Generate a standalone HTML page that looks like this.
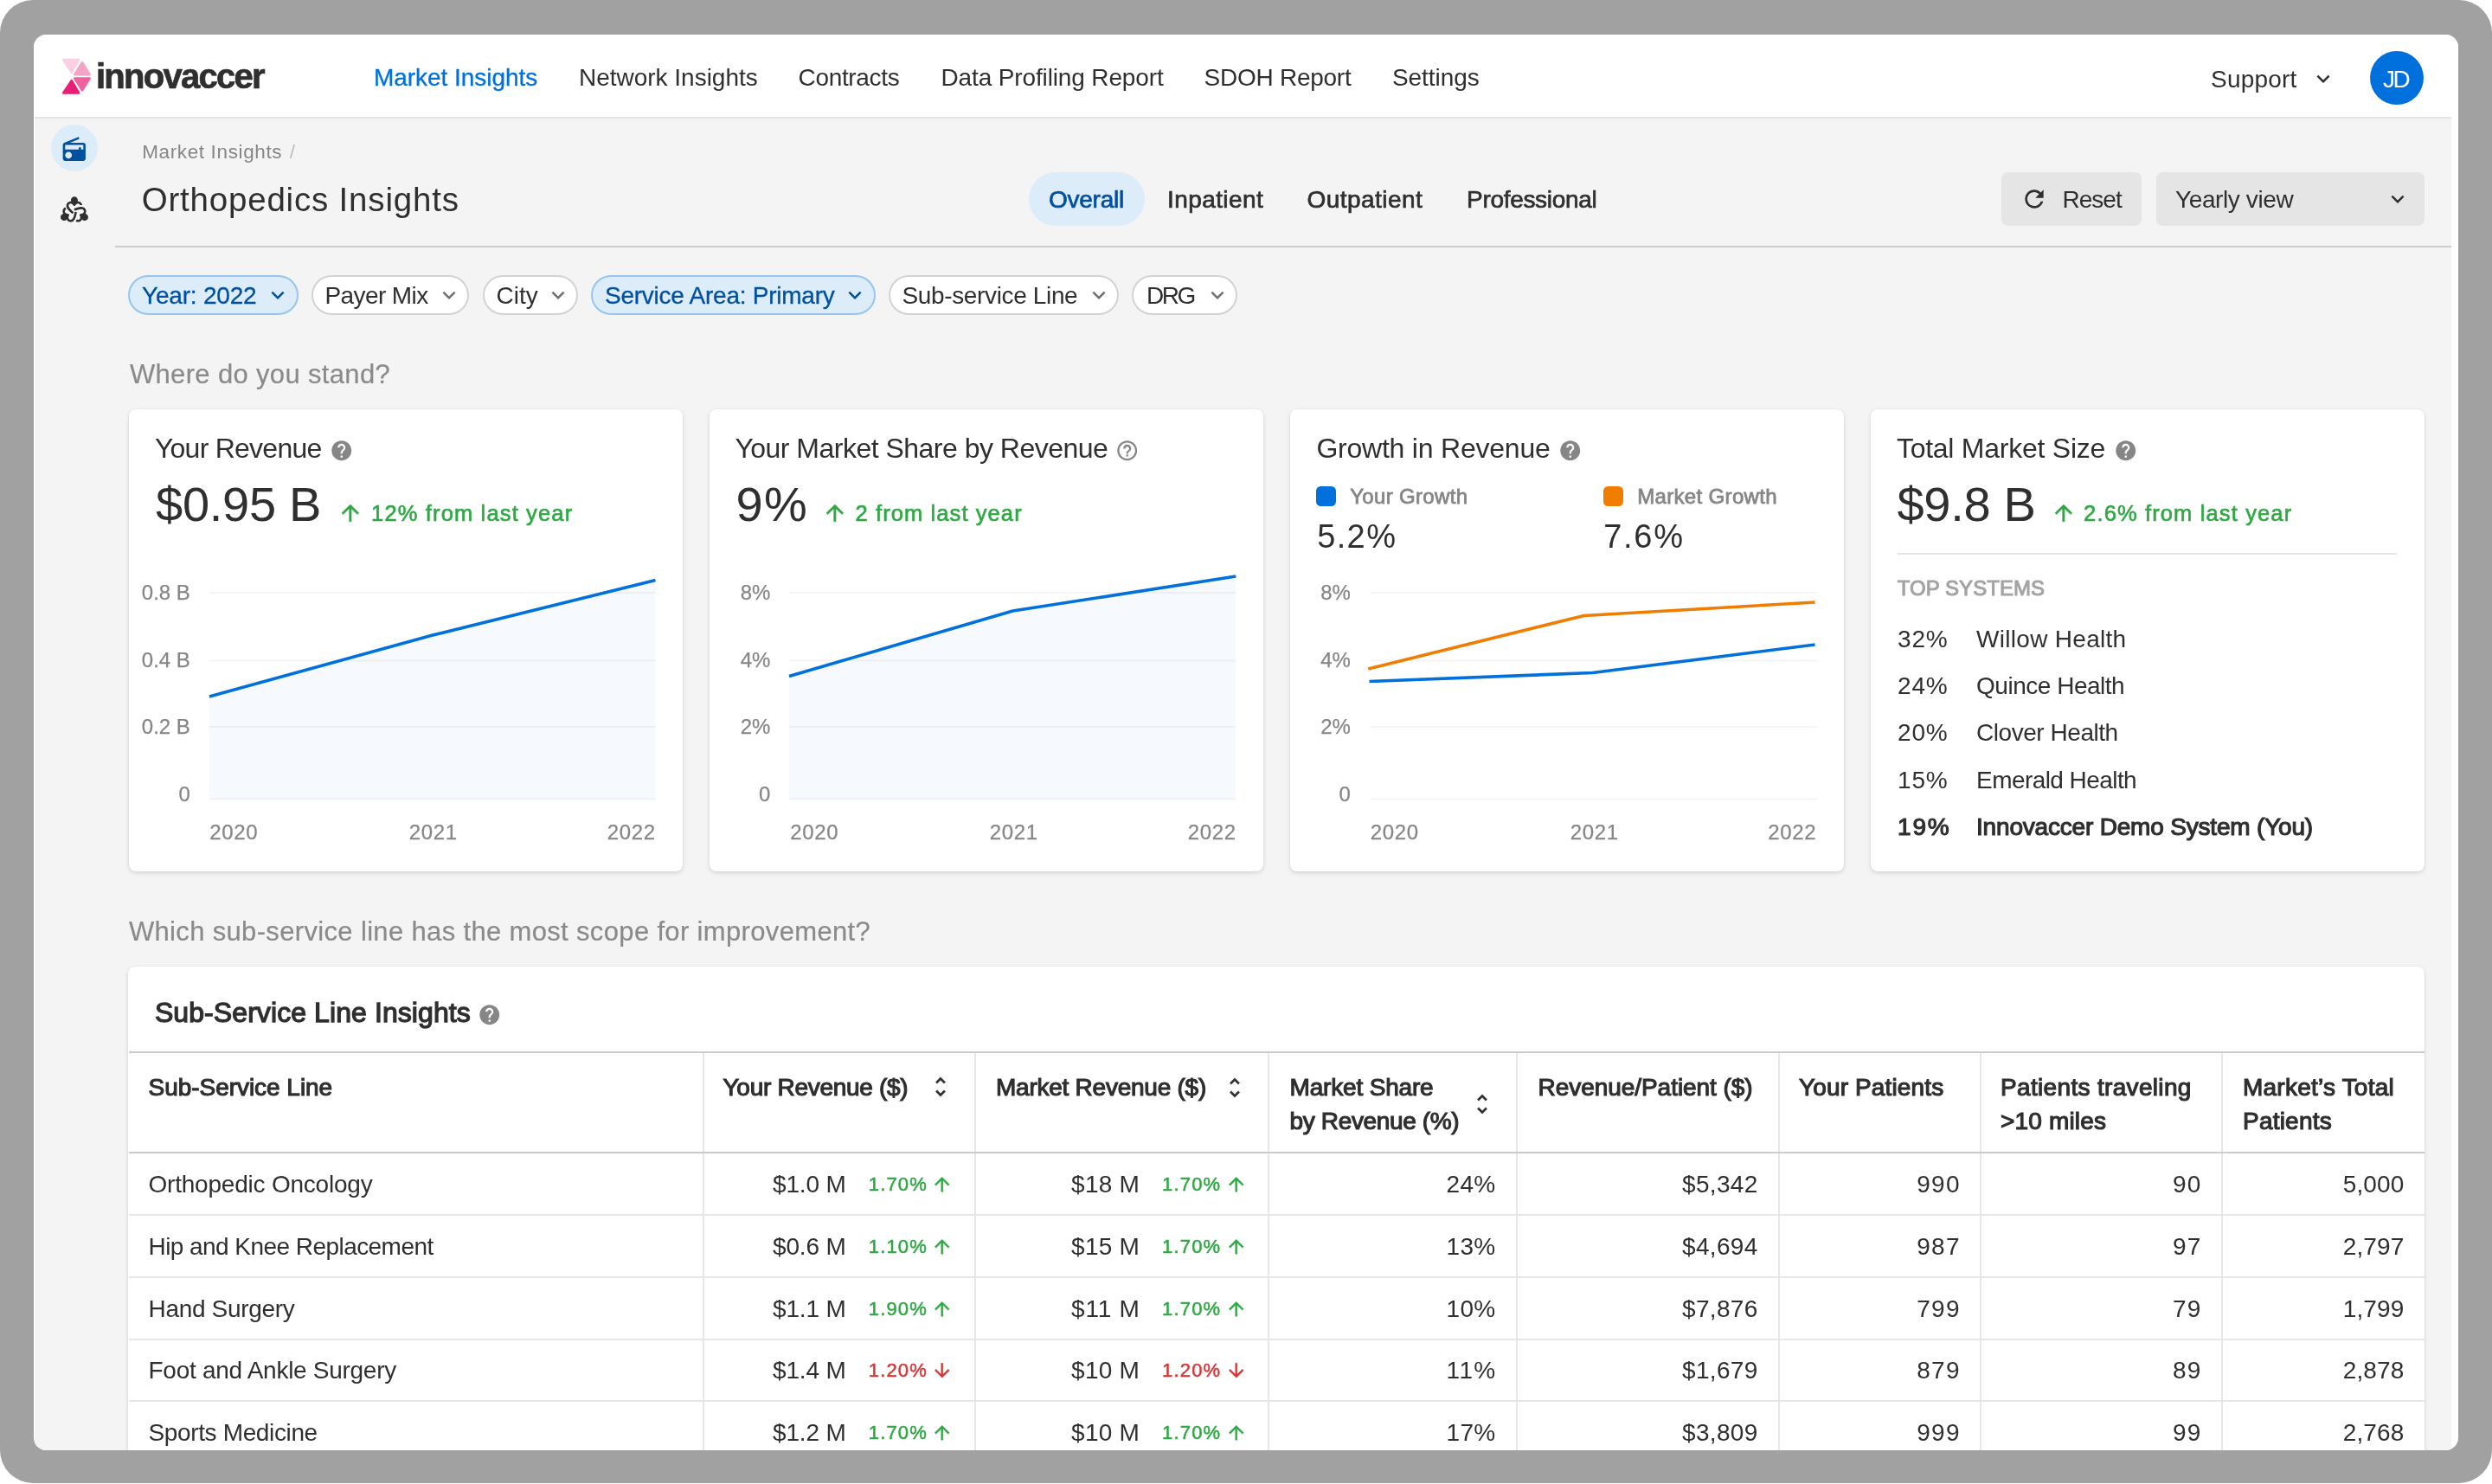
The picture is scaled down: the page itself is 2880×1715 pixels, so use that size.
<!DOCTYPE html><html lang="en"><head><meta charset="utf-8"><title>Orthopedics Insights</title><style>
html,body{margin:0;padding:0;background:#fff}
body{width:2880px;height:1715px;overflow:hidden;position:relative;font-family:"Liberation Sans",Arial,Helvetica,sans-serif}
#frame{position:absolute;left:0;top:0;width:2880px;height:1714.4px;background:#a1a1a1;border-radius:38px}
#win{position:absolute;left:39px;top:40px;width:2802px;height:1636px;border-radius:14.5px;overflow:hidden;background:#fff}
#pg{position:absolute;left:-39px;top:-40px;width:2880px;height:1715px;will-change:transform}
#pg div{position:absolute}
.i{position:absolute;overflow:visible}
.t{position:absolute;white-space:nowrap;line-height:1;display:block}
</style></head><body><div id="frame"></div>
<div id="win">
<div id="pg">
<div style="left:39px;top:40px;width:2802px;height:95px;background:#fff"></div>
<div style="left:40px;top:135px;width:2793px;height:2px;background:#e4e4e4"></div>
<div style="left:39.5px;top:137px;width:2793.5px;height:1540px;background:#f4f4f4"></div>
<svg class="i" style="left:66px;top:62px" width="46" height="52" viewBox="66 62 46 52"><g stroke-linejoin="round" stroke-width="2.7"><path d="M73.2 69.2H91L82.7 83.6z" fill="#fbd0e3" stroke="#fbd0e3"/><path d="M95 72.3L103.6 86.2H86.3z" fill="#f5a3c7" stroke="#f5a3c7"/><path d="M86.3 90.5H103.6L95 104.4z" fill="#ef629f" stroke="#ef629f"/><path d="M82.7 93.2L91 107.5H73.2z" fill="#e81f76" stroke="#e81f76"/></g></svg>
<span class="t" id="t0" style="font-size:40px;color:#2f2f2f;font-weight:700;-webkit-text-stroke:0.7px #2f2f2f;letter-spacing:-1.713px;left:110.90px;top:67.80px;">innovaccer</span>
<span class="t" id="t1" style="font-size:28px;color:#0070dd;-webkit-text-stroke:0.3px #0070dd;letter-spacing:-0.049px;left:432.02px;top:75.70px;">Market Insights</span>
<span class="t" id="t2" style="font-size:28px;color:#2f2f2f;letter-spacing:-0.019px;left:669.02px;top:75.70px;">Network Insights</span>
<span class="t" id="t3" style="font-size:28px;color:#2f2f2f;letter-spacing:-0.331px;left:922.52px;top:75.70px;">Contracts</span>
<span class="t" id="t4" style="font-size:28px;color:#2f2f2f;letter-spacing:-0.136px;left:1087.52px;top:75.70px;">Data Profiling Report</span>
<span class="t" id="t5" style="font-size:28px;color:#2f2f2f;letter-spacing:-0.254px;left:1391.52px;top:75.70px;">SDOH Report</span>
<span class="t" id="t6" style="font-size:28px;color:#2f2f2f;letter-spacing:-0.070px;left:1609.02px;top:75.70px;">Settings</span>
<span class="t" id="t7" style="font-size:28px;color:#2f2f2f;letter-spacing:0.184px;left:2555.02px;top:78.00px;">Support</span>
<svg class="i" style="left:2670.00px;top:75.62px" width="30.00" height="30.00" viewBox="0 0 24 24"><path fill="#2f2f2f" d="M16.59 8.59L12 13.17 7.41 8.59 6 10l6 6 6-6z"/></svg>
<div style="left:2739.3px;top:59.2px;width:62px;height:62px;background:#0070dd;border-radius:50%"></div>
<span class="t" id="t8" style="font-size:28px;color:#fff;letter-spacing:-2.554px;left:2754.02px;top:78.00px;">JD</span>
<div style="left:59.3px;top:144.2px;width:54.2px;height:54.2px;background:#dcecf9;border-radius:50%"></div>
<svg class="i" style="left:70.42px;top:156.88px" width="31.56" height="31.56" viewBox="0 0 24 24"><path fill="#0050a0" d="M3.24 6.15C2.51 6.43 2 7.17 2 8v12c0 1.1.89 2 2 2h16c1.11 0 2-.9 2-2V8c0-1.11-.89-2-2-2H8.3l8.26-3.34L15.88 1 3.24 6.15zM7 20c-1.66 0-3-1.34-3-3s1.34-3 3-3 3 1.34 3 3-1.34 3-3 3zm13-8h-2v-2h-2v2H4V8h16v4z"/></svg>
<svg class="i" style="left:70.19px;top:225.77px" width="31.92" height="31.92" viewBox="0 0 24 24"><path fill="#2f2f2f" d="M10.1 15.9l1.42-1.42C8.79 12.05 7 10.41 7 8.85 7 7.8 7.8 7 8.85 7c1.11 0 1.54.65 2.68 2h.93c1.12-1.31 1.53-2 2.68-2 .87 0 1.55.54 1.77 1.32.35-.04.68-.06 1-.06.36 0 .7.03 1.03.08C18.7 6.43 17.13 5 15.15 5c-.12 0-.23.03-.35.04.12-.33.2-.67.2-1.04 0-1.66-1.34-3-3-3S9 2.340 9 4c0 .37.08.71.2 1.04C9.08 5.030 8.970 5 8.850 5 6.690 5 5 6.690 5 8.850c0 2.420 2.040 4.310 5.100 7.050zM22.500 16.240c-.32-.18-.66-.29-1-.35.07-.1.15-.18.21-.28 1.080-1.870.460-4.180-1.410-5.260-2.090-1.210-4.760-.39-8.650.9l.52 1.940c3.470-1.140 5.790-1.880 7.140-1.100.91.53 1.200 1.610.68 2.530-.56.96-1.330 1-3.070 1.320l-.47.81c.58 1.620.97 2.330.39 3.320-.53.91-1.610 1.200-2.530.68-.06-.03-.11-.09-.17-.13-.3.67-.64 1.240-1.030 1.730.07.04.13.09.2.14 1.870 1.080 4.180.46 5.260-1.410.06-.1.09-.21.14-.32.22.27.48.51.8.69 1.430.83 3.270.34 4.100-1.100s.32-3.280-1.110-4.110zM12.320 14.010c-.74 3.580-1.270 5.950-2.620 6.730-.91.53-2 .24-2.530-.68-.56-.96-.2-1.660.39-3.320l-.46-.81c-1.700-.31-2.500-.33-3.070-1.320-.53-.91-.24-2 .68-2.530.09-.05.19-.08.29-.11-.35-.56-.64-1.170-.82-1.850-.16.07-.32.14-.48.23-1.870 1.080-2.490 3.390-1.410 5.260.06.1.14.18.21.28-.34.06-.68.17-1 .35-1.430.83-1.930 2.660-1.100 4.100s2.660 1.930 4.100 1.100c.32-.18.58-.42.8-.69.05.11.08.22.14.32 1.080 1.870 3.390 2.490 5.260 1.410 2.090-1.210 2.710-3.930 3.550-7.940l-1.930-.53z"/></svg>
<span class="t" id="t9" style="font-size:22.5px;color:#868686;letter-spacing:0.628px;left:164.21px;top:165.00px;">Market Insights</span>
<span class="t" id="t10" style="font-size:22.5px;color:#bdbdbd;left:334.71px;top:165.00px;">/</span>
<span class="t" id="t11" style="font-size:38.5px;color:#2f2f2f;letter-spacing:0.807px;left:163.65px;top:212.00px;">Orthopedics Insights</span>
<div style="left:1189px;top:199px;width:133.5px;height:62px;background:#dcecf9;border-radius:31px"></div>
<span class="t" id="t12" style="font-size:28px;color:#0050a0;-webkit-text-stroke:0.7px #0050a0;letter-spacing:-0.254px;left:1212.02px;top:217.00px;">Overall</span>
<span class="t" id="t13" style="font-size:28px;color:#2f2f2f;-webkit-text-stroke:0.7px #2f2f2f;letter-spacing:0.407px;left:1349.02px;top:217.00px;">Inpatient</span>
<span class="t" id="t14" style="font-size:28px;color:#2f2f2f;-webkit-text-stroke:0.7px #2f2f2f;letter-spacing:0.442px;left:1510.52px;top:217.00px;">Outpatient</span>
<span class="t" id="t15" style="font-size:28px;color:#2f2f2f;-webkit-text-stroke:0.7px #2f2f2f;letter-spacing:-0.310px;left:1695.02px;top:217.00px;">Professional</span>
<div style="left:2312.5px;top:199px;width:162.5px;height:62px;background:#e5e5e5;border-radius:8px"></div>
<svg class="i" style="left:2335.40px;top:214.10px" width="31.99" height="31.99" viewBox="0 0 24 24"><path fill="#2f2f2f" d="M17.65 6.35C16.2 4.9 14.21 4 12 4c-4.42 0-7.99 3.58-7.99 8s3.57 8 7.99 8c3.73 0 6.84-2.55 7.73-6h-2.08c-.82 2.33-3.04 4-5.65 4-3.31 0-6-2.69-6-6s2.69-6 6-6c1.66 0 3.14.69 4.22 1.78L13 11h7V4l-2.35 2.35z"/></svg>
<span class="t" id="t16" style="font-size:28px;color:#2f2f2f;letter-spacing:-0.994px;left:2383.52px;top:217.00px;">Reset</span>
<div style="left:2491.5px;top:199px;width:310px;height:62px;background:#e5e5e5;border-radius:8px"></div>
<span class="t" id="t17" style="font-size:28px;color:#2f2f2f;letter-spacing:-0.391px;left:2514.02px;top:217.00px;">Yearly view</span>
<svg class="i" style="left:2755.50px;top:215.12px" width="30.00" height="30.00" viewBox="0 0 24 24"><path fill="#2f2f2f" d="M16.59 8.59L12 13.17 7.41 8.59 6 10l6 6 6-6z"/></svg>
<div style="left:132.5px;top:284px;width:2700.5px;height:2px;background:#cdcdcd"></div>
<div style="left:148.4px;top:317.5px;width:196.2px;height:46.2px;background:#dcecf9;border:2px solid #97c5f0;border-radius:23.1px;box-sizing:border-box"></div>
<span class="t" id="t18" style="font-size:28px;color:#0050a0;-webkit-text-stroke:0.3px #0050a0;letter-spacing:-0.194px;left:164.02px;top:327.50px;">Year: 2022</span>
<svg class="i" style="left:306.20px;top:325.62px" width="30.00" height="30.00" viewBox="0 0 24 24"><path fill="#0050a0" d="M16.59 8.59L12 13.17 7.41 8.59 6 10l6 6 6-6z"/></svg>
<div style="left:359.9px;top:317.5px;width:182.2px;height:46.2px;background:#fff;border:2px solid #d3d3d3;border-radius:23.1px;box-sizing:border-box"></div>
<span class="t" id="t19" style="font-size:28px;color:#2f2f2f;letter-spacing:-0.599px;left:375.52px;top:327.50px;">Payer Mix</span>
<svg class="i" style="left:504.00px;top:325.62px" width="30.00" height="30.00" viewBox="0 0 24 24"><path fill="#707070" d="M16.59 8.59L12 13.17 7.41 8.59 6 10l6 6 6-6z"/></svg>
<div style="left:557.9px;top:317.5px;width:110.2px;height:46.2px;background:#fff;border:2px solid #d3d3d3;border-radius:23.1px;box-sizing:border-box"></div>
<span class="t" id="t20" style="font-size:28px;color:#2f2f2f;letter-spacing:-0.018px;left:573.52px;top:327.50px;">City</span>
<svg class="i" style="left:629.70px;top:325.62px" width="30.00" height="30.00" viewBox="0 0 24 24"><path fill="#707070" d="M16.59 8.59L12 13.17 7.41 8.59 6 10l6 6 6-6z"/></svg>
<div style="left:682.9px;top:317.5px;width:328.7px;height:46.2px;background:#dcecf9;border:2px solid #97c5f0;border-radius:23.1px;box-sizing:border-box"></div>
<span class="t" id="t21" style="font-size:28px;color:#0050a0;-webkit-text-stroke:0.3px #0050a0;letter-spacing:-0.253px;left:699.02px;top:327.50px;">Service Area: Primary</span>
<svg class="i" style="left:973.20px;top:325.62px" width="30.00" height="30.00" viewBox="0 0 24 24"><path fill="#0050a0" d="M16.59 8.59L12 13.17 7.41 8.59 6 10l6 6 6-6z"/></svg>
<div style="left:1026.9px;top:317.5px;width:266.2px;height:46.2px;background:#fff;border:2px solid #d3d3d3;border-radius:23.1px;box-sizing:border-box"></div>
<span class="t" id="t22" style="font-size:28px;color:#2f2f2f;letter-spacing:-0.359px;left:1042.52px;top:327.50px;">Sub-service Line</span>
<svg class="i" style="left:1254.50px;top:325.62px" width="30.00" height="30.00" viewBox="0 0 24 24"><path fill="#707070" d="M16.59 8.59L12 13.17 7.41 8.59 6 10l6 6 6-6z"/></svg>
<div style="left:1308.4px;top:317.5px;width:121.7px;height:46.2px;background:#fff;border:2px solid #d3d3d3;border-radius:23.1px;box-sizing:border-box"></div>
<span class="t" id="t23" style="font-size:28px;color:#2f2f2f;letter-spacing:-2.527px;left:1325.02px;top:327.50px;">DRG</span>
<svg class="i" style="left:1392.00px;top:325.62px" width="30.00" height="30.00" viewBox="0 0 24 24"><path fill="#707070" d="M16.59 8.59L12 13.17 7.41 8.59 6 10l6 6 6-6z"/></svg>
<span class="t" id="t24" style="font-size:31px;color:#8a8a8a;-webkit-text-stroke:0.2px #8a8a8a;letter-spacing:0.343px;left:149.91px;top:417.00px;">Where do you stand?</span>
<div style="left:148.5px;top:473px;width:640.5px;height:533.5px;background:#fff;border-radius:8px;box-shadow:0 2px 5px rgba(0,0,0,.13),0 0 2px rgba(0,0,0,.06)"></div>
<div style="left:819.5px;top:473px;width:640.5px;height:533.5px;background:#fff;border-radius:8px;box-shadow:0 2px 5px rgba(0,0,0,.13),0 0 2px rgba(0,0,0,.06)"></div>
<div style="left:1490.5px;top:473px;width:640.5px;height:533.5px;background:#fff;border-radius:8px;box-shadow:0 2px 5px rgba(0,0,0,.13),0 0 2px rgba(0,0,0,.06)"></div>
<div style="left:2161.5px;top:473px;width:640.5px;height:533.5px;background:#fff;border-radius:8px;box-shadow:0 2px 5px rgba(0,0,0,.13),0 0 2px rgba(0,0,0,.06)"></div>
<span class="t" id="t25" style="font-size:32px;color:#2f2f2f;letter-spacing:-0.747px;left:178.88px;top:501.50px;">Your Revenue</span>
<svg class="i" style="left:380.76px;top:507.06px" width="27.48" height="27.48" viewBox="0 0 24 24"><path fill="#868686" d="M12 2C6.48 2 2 6.48 2 12s4.48 10 10 10 10-4.48 10-10S17.52 2 12 2zm1 17h-2v-2h2v2zm2.07-7.75l-.9.92C13.45 12.9 13 13.5 13 15h-2v-.5c0-1.1.45-2.1 1.17-2.83l1.24-1.26c.37-.36.59-.86.59-1.41 0-1.1-.9-2-2-2s-2 .9-2 2H8c0-2.21 1.79-4 4-4s4 1.79 4 4c0 .88-.36 1.68-.93 2.25z"/></svg>
<span class="t" id="t26" style="font-size:56px;color:#2f2f2f;letter-spacing:-0.281px;left:180.04px;top:555.30px;">$0.95 B</span>
<svg class="i" style="left:389.65px;top:578.25px" width="29.70" height="29.70" viewBox="0 0 24 24"><path fill="#2ea843" d="M4 12l1.41 1.41L11 7.83V20h2V7.83l5.58 5.59L20 12l-8-8-8 8z" stroke="#2ea843" stroke-width="0.35"/></svg>
<span class="t" id="t27" style="font-size:25.5px;color:#2ea843;-webkit-text-stroke:0.6px #2ea843;letter-spacing:1.143px;left:429.11px;top:581.00px;">12% from last year</span>
<span class="t" id="t28" style="font-size:24px;color:#868686;-webkit-text-stroke:0.25px #868686;left:163.83px;top:673.00px;">0.8 B</span>
<span class="t" id="t29" style="font-size:24px;color:#868686;-webkit-text-stroke:0.25px #868686;left:163.83px;top:750.50px;">0.4 B</span>
<span class="t" id="t30" style="font-size:24px;color:#868686;-webkit-text-stroke:0.25px #868686;left:163.83px;top:828.00px;">0.2 B</span>
<span class="t" id="t31" style="font-size:24px;color:#868686;-webkit-text-stroke:0.25px #868686;left:206.51px;top:905.50px;">0</span>
<svg class="i" style="left:242px;top:650px" width="515.5" height="290" viewBox="242 650 515.5 290"><polygon points="242,805 500,734 757.5,670.5 757.5,923.5 242,923.5" fill="#f6fafe"/><rect x="242" y="684" width="515.5" height="2" fill="#000" fill-opacity="0.045"/><rect x="242" y="762.5" width="515.5" height="2" fill="#000" fill-opacity="0.045"/><rect x="242" y="839" width="515.5" height="2" fill="#000" fill-opacity="0.045"/><rect x="242" y="922.5" width="515.5" height="2" fill="#000" fill-opacity="0.045"/><polyline points="242,805 500,734 757.5,670.5" fill="none" stroke="#0070dd" stroke-width="3.6" stroke-linejoin="round"/></svg>
<span class="t" id="t32" style="font-size:24px;color:#868686;-webkit-text-stroke:0.25px #868686;letter-spacing:0.683px;left:242.16px;top:949.50px;">2020</span>
<span class="t" id="t33" style="font-size:24px;color:#868686;-webkit-text-stroke:0.25px #868686;letter-spacing:0.683px;left:472.66px;top:949.50px;">2021</span>
<span class="t" id="t34" style="font-size:24px;color:#868686;-webkit-text-stroke:0.25px #868686;letter-spacing:0.683px;left:701.66px;top:949.50px;">2022</span>
<span class="t" id="t35" style="font-size:32px;color:#2f2f2f;letter-spacing:-0.514px;left:849.38px;top:501.50px;">Your Market Share by Revenue</span>
<svg class="i" style="left:1288.51px;top:507.06px" width="27.48" height="27.48" viewBox="0 0 24 24"><path fill="#868686" d="M11 18h2v-2h-2v2zm1-16C6.48 2 2 6.48 2 12s4.48 10 10 10 10-4.48 10-10S17.52 2 12 2zm0 18c-4.41 0-8-3.59-8-8s3.59-8 8-8 8 3.59 8 8-3.59 8-8 8zm0-14c-2.21 0-4 1.79-4 4h2c0-1.1.9-2 2-2s2 .9 2 2c0 2-3 1.75-3 5h2c0-2.25 3-2.5 3-5 0-2.21-1.79-4-4-4z"/></svg>
<span class="t" id="t36" style="font-size:56px;color:#2f2f2f;letter-spacing:1.422px;left:850.54px;top:555.30px;">9%</span>
<svg class="i" style="left:950.05px;top:578.25px" width="29.70" height="29.70" viewBox="0 0 24 24"><path fill="#2ea843" d="M4 12l1.41 1.41L11 7.83V20h2V7.83l5.58 5.59L20 12l-8-8-8 8z" stroke="#2ea843" stroke-width="0.35"/></svg>
<span class="t" id="t37" style="font-size:25.5px;color:#2ea843;-webkit-text-stroke:0.6px #2ea843;letter-spacing:1.086px;left:988.61px;top:581.00px;">2 from last year</span>
<span class="t" id="t38" style="font-size:24px;color:#868686;-webkit-text-stroke:0.25px #868686;left:855.68px;top:673.00px;">8%</span>
<span class="t" id="t39" style="font-size:24px;color:#868686;-webkit-text-stroke:0.25px #868686;left:855.68px;top:750.50px;">4%</span>
<span class="t" id="t40" style="font-size:24px;color:#868686;-webkit-text-stroke:0.25px #868686;left:855.68px;top:828.00px;">2%</span>
<span class="t" id="t41" style="font-size:24px;color:#868686;-webkit-text-stroke:0.25px #868686;left:877.01px;top:905.50px;">0</span>
<svg class="i" style="left:912px;top:650px" width="516.3" height="290" viewBox="912 650 516.3 290"><polygon points="912,781.5 1170.5,706 1428.3,666 1428.3,923.5 912,923.5" fill="#f6fafe"/><rect x="912" y="684" width="516.3" height="2" fill="#000" fill-opacity="0.045"/><rect x="912" y="762.5" width="516.3" height="2" fill="#000" fill-opacity="0.045"/><rect x="912" y="839" width="516.3" height="2" fill="#000" fill-opacity="0.045"/><rect x="912" y="922.5" width="516.3" height="2" fill="#000" fill-opacity="0.045"/><polyline points="912,781.5 1170.5,706 1428.3,666" fill="none" stroke="#0070dd" stroke-width="3.6" stroke-linejoin="round"/></svg>
<span class="t" id="t42" style="font-size:24px;color:#868686;-webkit-text-stroke:0.25px #868686;letter-spacing:0.683px;left:913.16px;top:949.50px;">2020</span>
<span class="t" id="t43" style="font-size:24px;color:#868686;-webkit-text-stroke:0.25px #868686;letter-spacing:0.683px;left:1143.66px;top:949.50px;">2021</span>
<span class="t" id="t44" style="font-size:24px;color:#868686;-webkit-text-stroke:0.25px #868686;letter-spacing:0.683px;left:1372.66px;top:949.50px;">2022</span>
<span class="t" id="t45" style="font-size:32px;color:#2f2f2f;letter-spacing:-0.219px;left:1521.38px;top:501.50px;">Growth in Revenue</span>
<svg class="i" style="left:1800.51px;top:507.06px" width="27.48" height="27.48" viewBox="0 0 24 24"><path fill="#868686" d="M12 2C6.48 2 2 6.48 2 12s4.48 10 10 10 10-4.48 10-10S17.52 2 12 2zm1 17h-2v-2h2v2zm2.07-7.75l-.9.92C13.45 12.9 13 13.5 13 15h-2v-.5c0-1.1.45-2.1 1.17-2.83l1.24-1.26c.37-.36.59-.86.59-1.41 0-1.1-.9-2-2-2s-2 .9-2 2H8c0-2.21 1.79-4 4-4s4 1.79 4 4c0 .88-.36 1.68-.93 2.25z"/></svg>
<div style="left:1521.2px;top:562px;width:23.3px;height:23px;background:#0070dd;border-radius:5.5px"></div>
<div style="left:1853px;top:562px;width:23.3px;height:23px;background:#f07d00;border-radius:5.5px"></div>
<span class="t" id="t46" style="font-size:24px;color:#868686;-webkit-text-stroke:0.8px #868686;letter-spacing:0.342px;left:1560.16px;top:561.50px;">Your Growth</span>
<span class="t" id="t47" style="font-size:24px;color:#868686;-webkit-text-stroke:0.8px #868686;letter-spacing:0.339px;left:1892.16px;top:561.50px;">Market Growth</span>
<span class="t" id="t48" style="font-size:38px;color:#2f2f2f;letter-spacing:1.385px;left:1522.17px;top:600.50px;">5.2%</span>
<span class="t" id="t49" style="font-size:38px;color:#2f2f2f;letter-spacing:1.718px;left:1853.17px;top:600.50px;">7.6%</span>
<span class="t" id="t50" style="font-size:24px;color:#868686;-webkit-text-stroke:0.25px #868686;left:1526.18px;top:673.00px;">8%</span>
<span class="t" id="t51" style="font-size:24px;color:#868686;-webkit-text-stroke:0.25px #868686;left:1526.18px;top:750.50px;">4%</span>
<span class="t" id="t52" style="font-size:24px;color:#868686;-webkit-text-stroke:0.25px #868686;left:1526.18px;top:828.00px;">2%</span>
<span class="t" id="t53" style="font-size:24px;color:#868686;-webkit-text-stroke:0.25px #868686;left:1547.51px;top:905.50px;">0</span>
<svg class="i" style="left:1583.5px;top:650px" width="515.5" height="290" viewBox="1583.5 650 515.5 290"><rect x="1583.5" y="684" width="515.5" height="2" fill="#000" fill-opacity="0.045"/><rect x="1583.5" y="762.5" width="515.5" height="2" fill="#000" fill-opacity="0.045"/><rect x="1583.5" y="839" width="515.5" height="2" fill="#000" fill-opacity="0.045"/><rect x="1583.5" y="922.5" width="515.5" height="2" fill="#000" fill-opacity="0.045"/><polyline points="1580.8,773 1830,711.5 2097,696" fill="none" stroke="#f07d00" stroke-width="3.6" stroke-linejoin="round"/><polyline points="1582,787.5 1840,777.5 2097,745" fill="none" stroke="#0070dd" stroke-width="3.6" stroke-linejoin="round"/></svg>
<span class="t" id="t54" style="font-size:24px;color:#868686;-webkit-text-stroke:0.25px #868686;letter-spacing:0.683px;left:1583.66px;top:949.50px;">2020</span>
<span class="t" id="t55" style="font-size:24px;color:#868686;-webkit-text-stroke:0.25px #868686;letter-spacing:0.683px;left:1814.66px;top:949.50px;">2021</span>
<span class="t" id="t56" style="font-size:24px;color:#868686;-webkit-text-stroke:0.25px #868686;letter-spacing:0.683px;left:2043.16px;top:949.50px;">2022</span>
<span class="t" id="t57" style="font-size:32px;color:#2f2f2f;letter-spacing:-0.250px;left:2191.88px;top:501.50px;">Total Market Size</span>
<svg class="i" style="left:2442.51px;top:507.06px" width="27.48" height="27.48" viewBox="0 0 24 24"><path fill="#868686" d="M12 2C6.48 2 2 6.48 2 12s4.48 10 10 10 10-4.48 10-10S17.52 2 12 2zm1 17h-2v-2h2v2zm2.07-7.75l-.9.92C13.45 12.9 13 13.5 13 15h-2v-.5c0-1.1.45-2.1 1.17-2.83l1.24-1.26c.37-.36.59-.86.59-1.41 0-1.1-.9-2-2-2s-2 .9-2 2H8c0-2.21 1.79-4 4-4s4 1.79 4 4c0 .88-.36 1.68-.93 2.25z"/></svg>
<span class="t" id="t58" style="font-size:56px;color:#2f2f2f;letter-spacing:-0.309px;left:2192.54px;top:555.30px;">$9.8 B</span>
<svg class="i" style="left:2370.05px;top:578.25px" width="29.70" height="29.70" viewBox="0 0 24 24"><path fill="#2ea843" d="M4 12l1.41 1.41L11 7.83V20h2V7.83l5.58 5.59L20 12l-8-8-8 8z" stroke="#2ea843" stroke-width="0.35"/></svg>
<span class="t" id="t59" style="font-size:25.5px;color:#2ea843;-webkit-text-stroke:0.6px #2ea843;letter-spacing:1.131px;left:2408.11px;top:581.00px;">2.6% from last year</span>
<div style="left:2193px;top:639px;width:577px;height:2px;background:#e6e6e6"></div>
<span class="t" id="t60" style="font-size:24px;color:#a3a3a3;-webkit-text-stroke:1.0px #a3a3a3;letter-spacing:0.061px;left:2192.66px;top:668.00px;">TOP SYSTEMS</span>
<span class="t" id="t61" style="font-size:28px;color:#2f2f2f;letter-spacing:0.817px;left:2193.02px;top:724.60px;">32%</span>
<span class="t" id="t62" style="font-size:28px;color:#2f2f2f;letter-spacing:0.298px;left:2284.02px;top:724.60px;">Willow Health</span>
<span class="t" id="t63" style="font-size:28px;color:#2f2f2f;letter-spacing:0.817px;left:2193.02px;top:779.00px;">24%</span>
<span class="t" id="t64" style="font-size:28px;color:#2f2f2f;letter-spacing:-0.480px;left:2284.02px;top:779.00px;">Quince Health</span>
<span class="t" id="t65" style="font-size:28px;color:#2f2f2f;letter-spacing:0.817px;left:2193.02px;top:833.30px;">20%</span>
<span class="t" id="t66" style="font-size:28px;color:#2f2f2f;letter-spacing:-0.455px;left:2284.02px;top:833.30px;">Clover Health</span>
<span class="t" id="t67" style="font-size:28px;color:#2f2f2f;letter-spacing:0.817px;left:2193.02px;top:887.70px;">15%</span>
<span class="t" id="t68" style="font-size:28px;color:#2f2f2f;letter-spacing:-0.562px;left:2284.02px;top:887.70px;">Emerald Health</span>
<span class="t" id="t69" style="font-size:28px;color:#2f2f2f;-webkit-text-stroke:1.15px #2f2f2f;letter-spacing:1.817px;left:2193.02px;top:942.20px;">19%</span>
<span class="t" id="t70" style="font-size:28px;color:#2f2f2f;-webkit-text-stroke:1.15px #2f2f2f;letter-spacing:-0.188px;left:2284.02px;top:942.20px;">Innovaccer Demo System (You)</span>
<span class="t" id="t71" style="font-size:31px;color:#8a8a8a;-webkit-text-stroke:0.2px #8a8a8a;letter-spacing:0.342px;left:148.91px;top:1061.30px;">Which sub-service line has the most scope for improvement?</span>
<div style="left:148.2px;top:1116.8px;width:2653.6px;height:640px;background:#fff;border-radius:8px;box-shadow:0 2px 5px rgba(0,0,0,.13),0 0 2px rgba(0,0,0,.06)"></div>
<span class="t" id="t72" style="font-size:32px;color:#2f2f2f;-webkit-text-stroke:1.3px #2f2f2f;letter-spacing:0.086px;left:178.88px;top:1154.00px;">Sub-Service Line Insights</span>
<svg class="i" style="left:551.51px;top:1159.01px" width="27.48" height="27.48" viewBox="0 0 24 24"><path fill="#868686" d="M12 2C6.48 2 2 6.48 2 12s4.48 10 10 10 10-4.48 10-10S17.52 2 12 2zm1 17h-2v-2h2v2zm2.07-7.75l-.9.92C13.45 12.9 13 13.5 13 15h-2v-.5c0-1.1.45-2.1 1.17-2.83l1.24-1.26c.37-.36.59-.86.59-1.41 0-1.1-.9-2-2-2s-2 .9-2 2H8c0-2.21 1.79-4 4-4s4 1.79 4 4c0 .88-.36 1.68-.93 2.25z"/></svg>
<div style="left:811.5px;top:1217px;width:2px;height:480px;background:#e7e7e7"></div>
<div style="left:1125.5px;top:1217px;width:2px;height:480px;background:#e7e7e7"></div>
<div style="left:1464.5px;top:1217px;width:2px;height:480px;background:#e7e7e7"></div>
<div style="left:1752px;top:1217px;width:2px;height:480px;background:#e7e7e7"></div>
<div style="left:2054.5px;top:1217px;width:2px;height:480px;background:#e7e7e7"></div>
<div style="left:2287.5px;top:1217px;width:2px;height:480px;background:#e7e7e7"></div>
<div style="left:2566.8px;top:1217px;width:2px;height:480px;background:#e7e7e7"></div>
<div style="left:148.5px;top:1403px;width:2653.5px;height:2px;background:#e7e7e7"></div>
<div style="left:148.5px;top:1474.75px;width:2653.5px;height:2px;background:#e7e7e7"></div>
<div style="left:148.5px;top:1546.5px;width:2653.5px;height:2px;background:#e7e7e7"></div>
<div style="left:148.5px;top:1618.25px;width:2653.5px;height:2px;background:#e7e7e7"></div>
<div style="left:148.5px;top:1215px;width:2653.5px;height:2px;background:#cbcbcb"></div>
<div style="left:148.5px;top:1331px;width:2653.5px;height:2px;background:#cbcbcb"></div>
<span class="t" id="t73" style="font-size:28px;color:#2f2f2f;-webkit-text-stroke:1.15px #2f2f2f;letter-spacing:-0.037px;left:171.52px;top:1243.00px;">Sub-Service Line</span>
<span class="t" id="t74" style="font-size:28px;color:#2f2f2f;-webkit-text-stroke:1.15px #2f2f2f;letter-spacing:-0.284px;left:835.52px;top:1243.00px;">Your Revenue ($)</span>
<svg class="i" style="left:1072.10px;top:1241.00px" width="30.00" height="30.00" viewBox="0 0 24 24"><path fill="#2f2f2f" d="M12 5.83L15.17 9l1.41-1.41L12 3 7.41 7.59 8.83 9 12 5.83zm0 12.34L8.83 15l-1.41 1.41L12 21l4.59-4.59L15.17 15 12 18.17z" stroke="#2f2f2f" stroke-width="0.3"/></svg>
<span class="t" id="t75" style="font-size:28px;color:#2f2f2f;-webkit-text-stroke:1.15px #2f2f2f;letter-spacing:-0.250px;left:1151.02px;top:1243.00px;">Market Revenue ($)</span>
<svg class="i" style="left:1411.50px;top:1241.50px" width="30.00" height="30.00" viewBox="0 0 24 24"><path fill="#2f2f2f" d="M12 5.83L15.17 9l1.41-1.41L12 3 7.41 7.59 8.83 9 12 5.83zm0 12.34L8.83 15l-1.41 1.41L12 21l4.59-4.59L15.17 15 12 18.17z" stroke="#2f2f2f" stroke-width="0.3"/></svg>
<span class="t" id="t76" style="font-size:28px;color:#2f2f2f;-webkit-text-stroke:1.15px #2f2f2f;letter-spacing:-0.173px;left:1490.52px;top:1243.00px;">Market Share</span>
<span class="t" id="t77" style="font-size:28px;color:#2f2f2f;-webkit-text-stroke:1.15px #2f2f2f;letter-spacing:-0.353px;left:1490.52px;top:1282.00px;">by Revenue (%)</span>
<svg class="i" style="left:1698.25px;top:1260.50px" width="30.00" height="30.00" viewBox="0 0 24 24"><path fill="#2f2f2f" d="M12 5.83L15.17 9l1.41-1.41L12 3 7.41 7.59 8.83 9 12 5.83zm0 12.34L8.83 15l-1.41 1.41L12 21l4.59-4.59L15.17 15 12 18.17z" stroke="#2f2f2f" stroke-width="0.3"/></svg>
<span class="t" id="t78" style="font-size:28px;color:#2f2f2f;-webkit-text-stroke:1.15px #2f2f2f;letter-spacing:-0.048px;left:1777.52px;top:1243.00px;">Revenue/Patient ($)</span>
<span class="t" id="t79" style="font-size:28px;color:#2f2f2f;-webkit-text-stroke:1.15px #2f2f2f;letter-spacing:0.137px;left:2079.02px;top:1243.00px;">Your Patients</span>
<span class="t" id="t80" style="font-size:28px;color:#2f2f2f;-webkit-text-stroke:1.15px #2f2f2f;letter-spacing:0.328px;left:2312.02px;top:1243.00px;">Patients traveling</span>
<span class="t" id="t81" style="font-size:28px;color:#2f2f2f;-webkit-text-stroke:1.15px #2f2f2f;letter-spacing:0.169px;left:2312.02px;top:1282.00px;">&gt;10 miles</span>
<span class="t" id="t82" style="font-size:28px;color:#2f2f2f;-webkit-text-stroke:1.15px #2f2f2f;letter-spacing:0.228px;left:2592.02px;top:1243.00px;">Market’s Total</span>
<span class="t" id="t83" style="font-size:28px;color:#2f2f2f;-webkit-text-stroke:1.15px #2f2f2f;letter-spacing:0.215px;left:2592.02px;top:1282.00px;">Patients</span>
<span class="t" id="t84" style="font-size:28px;color:#2f2f2f;letter-spacing:-0.215px;left:171.52px;top:1355.00px;">Orthopedic Oncology</span>
<span class="t" id="t85" style="font-size:28px;color:#2f2f2f;letter-spacing:-0.186px;left:893.10px;top:1355.00px;">$1.0 M</span>
<span class="t" id="t86" style="font-size:22px;color:#2ea843;-webkit-text-stroke:0.5px #2ea843;letter-spacing:1.132px;left:1003.83px;top:1358.00px;">1.70%</span>
<svg class="i" style="left:1076.45px;top:1356.15px" width="25.50" height="25.50" viewBox="0 0 24 24"><path fill="#2ea843" d="M4 12l1.41 1.41L11 7.83V20h2V7.83l5.58 5.59L20 12l-8-8-8 8z" stroke="#2ea843" stroke-width="0.35"/></svg>
<span class="t" id="t87" style="font-size:28px;color:#2f2f2f;letter-spacing:0.213px;left:1238.10px;top:1355.00px;">$18 M</span>
<span class="t" id="t88" style="font-size:22px;color:#2ea843;-webkit-text-stroke:0.5px #2ea843;letter-spacing:1.182px;left:1343.03px;top:1358.00px;">1.70%</span>
<svg class="i" style="left:1415.95px;top:1356.15px" width="25.50" height="25.50" viewBox="0 0 24 24"><path fill="#2ea843" d="M4 12l1.41 1.41L11 7.83V20h2V7.83l5.58 5.59L20 12l-8-8-8 8z" stroke="#2ea843" stroke-width="0.35"/></svg>
<span class="t" id="t89" style="font-size:28px;color:#2f2f2f;letter-spacing:0.317px;left:1671.60px;top:1355.00px;">24%</span>
<span class="t" id="t90" style="font-size:28px;color:#2f2f2f;letter-spacing:0.308px;left:1944.10px;top:1355.00px;">$5,342</span>
<span class="t" id="t91" style="font-size:28px;color:#2f2f2f;letter-spacing:1.231px;left:2215.30px;top:1355.00px;">990</span>
<span class="t" id="t92" style="font-size:28px;color:#2f2f2f;letter-spacing:1.124px;left:2511.00px;top:1355.00px;">90</span>
<span class="t" id="t93" style="font-size:28px;color:#2f2f2f;letter-spacing:0.150px;left:2707.70px;top:1355.00px;">5,000</span>
<span class="t" id="t94" style="font-size:28px;color:#2f2f2f;letter-spacing:-0.555px;left:171.52px;top:1426.80px;">Hip and Knee Replacement</span>
<span class="t" id="t95" style="font-size:28px;color:#2f2f2f;letter-spacing:-0.186px;left:893.10px;top:1426.80px;">$0.6 M</span>
<span class="t" id="t96" style="font-size:22px;color:#2ea843;-webkit-text-stroke:0.5px #2ea843;letter-spacing:1.132px;left:1003.83px;top:1429.80px;">1.10%</span>
<svg class="i" style="left:1076.45px;top:1427.95px" width="25.50" height="25.50" viewBox="0 0 24 24"><path fill="#2ea843" d="M4 12l1.41 1.41L11 7.83V20h2V7.83l5.58 5.59L20 12l-8-8-8 8z" stroke="#2ea843" stroke-width="0.35"/></svg>
<span class="t" id="t97" style="font-size:28px;color:#2f2f2f;letter-spacing:0.213px;left:1238.10px;top:1426.80px;">$15 M</span>
<span class="t" id="t98" style="font-size:22px;color:#2ea843;-webkit-text-stroke:0.5px #2ea843;letter-spacing:1.182px;left:1343.03px;top:1429.80px;">1.70%</span>
<svg class="i" style="left:1415.95px;top:1427.95px" width="25.50" height="25.50" viewBox="0 0 24 24"><path fill="#2ea843" d="M4 12l1.41 1.41L11 7.83V20h2V7.83l5.58 5.59L20 12l-8-8-8 8z" stroke="#2ea843" stroke-width="0.35"/></svg>
<span class="t" id="t99" style="font-size:28px;color:#2f2f2f;letter-spacing:0.317px;left:1671.60px;top:1426.80px;">13%</span>
<span class="t" id="t100" style="font-size:28px;color:#2f2f2f;letter-spacing:0.308px;left:1944.10px;top:1426.80px;">$4,694</span>
<span class="t" id="t101" style="font-size:28px;color:#2f2f2f;letter-spacing:1.231px;left:2215.30px;top:1426.80px;">987</span>
<span class="t" id="t102" style="font-size:28px;color:#2f2f2f;letter-spacing:1.124px;left:2511.00px;top:1426.80px;">97</span>
<span class="t" id="t103" style="font-size:28px;color:#2f2f2f;letter-spacing:0.150px;left:2707.70px;top:1426.80px;">2,797</span>
<span class="t" id="t104" style="font-size:28px;color:#2f2f2f;letter-spacing:-0.326px;left:171.52px;top:1498.50px;">Hand Surgery</span>
<span class="t" id="t105" style="font-size:28px;color:#2f2f2f;letter-spacing:-0.186px;left:893.10px;top:1498.50px;">$1.1 M</span>
<span class="t" id="t106" style="font-size:22px;color:#2ea843;-webkit-text-stroke:0.5px #2ea843;letter-spacing:1.132px;left:1003.83px;top:1501.50px;">1.90%</span>
<svg class="i" style="left:1076.45px;top:1499.65px" width="25.50" height="25.50" viewBox="0 0 24 24"><path fill="#2ea843" d="M4 12l1.41 1.41L11 7.83V20h2V7.83l5.58 5.59L20 12l-8-8-8 8z" stroke="#2ea843" stroke-width="0.35"/></svg>
<span class="t" id="t107" style="font-size:28px;color:#2f2f2f;letter-spacing:0.733px;left:1238.10px;top:1498.50px;">$11 M</span>
<span class="t" id="t108" style="font-size:22px;color:#2ea843;-webkit-text-stroke:0.5px #2ea843;letter-spacing:1.182px;left:1343.03px;top:1501.50px;">1.70%</span>
<svg class="i" style="left:1415.95px;top:1499.65px" width="25.50" height="25.50" viewBox="0 0 24 24"><path fill="#2ea843" d="M4 12l1.41 1.41L11 7.83V20h2V7.83l5.58 5.59L20 12l-8-8-8 8z" stroke="#2ea843" stroke-width="0.35"/></svg>
<span class="t" id="t109" style="font-size:28px;color:#2f2f2f;letter-spacing:0.317px;left:1671.60px;top:1498.50px;">10%</span>
<span class="t" id="t110" style="font-size:28px;color:#2f2f2f;letter-spacing:0.308px;left:1944.10px;top:1498.50px;">$7,876</span>
<span class="t" id="t111" style="font-size:28px;color:#2f2f2f;letter-spacing:1.231px;left:2215.30px;top:1498.50px;">799</span>
<span class="t" id="t112" style="font-size:28px;color:#2f2f2f;letter-spacing:1.124px;left:2511.00px;top:1498.50px;">79</span>
<span class="t" id="t113" style="font-size:28px;color:#2f2f2f;letter-spacing:0.150px;left:2707.70px;top:1498.50px;">1,799</span>
<span class="t" id="t114" style="font-size:28px;color:#2f2f2f;letter-spacing:-0.283px;left:171.52px;top:1570.30px;">Foot and Ankle Surgery</span>
<span class="t" id="t115" style="font-size:28px;color:#2f2f2f;letter-spacing:-0.186px;left:893.10px;top:1570.30px;">$1.4 M</span>
<span class="t" id="t116" style="font-size:22px;color:#d93737;-webkit-text-stroke:0.5px #d93737;letter-spacing:1.132px;left:1003.83px;top:1573.30px;">1.20%</span>
<svg class="i" style="left:1076.45px;top:1571.45px" width="25.50" height="25.50" viewBox="0 0 24 24"><path fill="#d93737" d="M20 12l-1.41-1.41L13 16.17V4h-2v12.17l-5.58-5.59L4 12l8 8 8-8z" stroke="#d93737" stroke-width="0.35"/></svg>
<span class="t" id="t117" style="font-size:28px;color:#2f2f2f;letter-spacing:0.213px;left:1238.10px;top:1570.30px;">$10 M</span>
<span class="t" id="t118" style="font-size:22px;color:#d93737;-webkit-text-stroke:0.5px #d93737;letter-spacing:1.182px;left:1343.03px;top:1573.30px;">1.20%</span>
<svg class="i" style="left:1415.95px;top:1571.45px" width="25.50" height="25.50" viewBox="0 0 24 24"><path fill="#d93737" d="M20 12l-1.41-1.41L13 16.17V4h-2v12.17l-5.58-5.59L4 12l8 8 8-8z" stroke="#d93737" stroke-width="0.35"/></svg>
<span class="t" id="t119" style="font-size:28px;color:#2f2f2f;letter-spacing:1.356px;left:1671.60px;top:1570.30px;">11%</span>
<span class="t" id="t120" style="font-size:28px;color:#2f2f2f;letter-spacing:0.308px;left:1944.10px;top:1570.30px;">$1,679</span>
<span class="t" id="t121" style="font-size:28px;color:#2f2f2f;letter-spacing:1.231px;left:2215.30px;top:1570.30px;">879</span>
<span class="t" id="t122" style="font-size:28px;color:#2f2f2f;letter-spacing:1.124px;left:2511.00px;top:1570.30px;">89</span>
<span class="t" id="t123" style="font-size:28px;color:#2f2f2f;letter-spacing:0.150px;left:2707.70px;top:1570.30px;">2,878</span>
<span class="t" id="t124" style="font-size:28px;color:#2f2f2f;letter-spacing:-0.363px;left:171.52px;top:1642.00px;">Sports Medicine</span>
<span class="t" id="t125" style="font-size:28px;color:#2f2f2f;letter-spacing:-0.186px;left:893.10px;top:1642.00px;">$1.2 M</span>
<span class="t" id="t126" style="font-size:22px;color:#2ea843;-webkit-text-stroke:0.5px #2ea843;letter-spacing:1.132px;left:1003.83px;top:1645.00px;">1.70%</span>
<svg class="i" style="left:1076.45px;top:1643.15px" width="25.50" height="25.50" viewBox="0 0 24 24"><path fill="#2ea843" d="M4 12l1.41 1.41L11 7.83V20h2V7.83l5.58 5.59L20 12l-8-8-8 8z" stroke="#2ea843" stroke-width="0.35"/></svg>
<span class="t" id="t127" style="font-size:28px;color:#2f2f2f;letter-spacing:0.213px;left:1238.10px;top:1642.00px;">$10 M</span>
<span class="t" id="t128" style="font-size:22px;color:#2ea843;-webkit-text-stroke:0.5px #2ea843;letter-spacing:1.182px;left:1343.03px;top:1645.00px;">1.70%</span>
<svg class="i" style="left:1415.95px;top:1643.15px" width="25.50" height="25.50" viewBox="0 0 24 24"><path fill="#2ea843" d="M4 12l1.41 1.41L11 7.83V20h2V7.83l5.58 5.59L20 12l-8-8-8 8z" stroke="#2ea843" stroke-width="0.35"/></svg>
<span class="t" id="t129" style="font-size:28px;color:#2f2f2f;letter-spacing:0.317px;left:1671.60px;top:1642.00px;">17%</span>
<span class="t" id="t130" style="font-size:28px;color:#2f2f2f;letter-spacing:0.308px;left:1944.10px;top:1642.00px;">$3,809</span>
<span class="t" id="t131" style="font-size:28px;color:#2f2f2f;letter-spacing:1.231px;left:2215.30px;top:1642.00px;">999</span>
<span class="t" id="t132" style="font-size:28px;color:#2f2f2f;letter-spacing:1.124px;left:2511.00px;top:1642.00px;">99</span>
<span class="t" id="t133" style="font-size:28px;color:#2f2f2f;letter-spacing:0.150px;left:2707.70px;top:1642.00px;">2,768</span>
</div></div>
</body></html>
